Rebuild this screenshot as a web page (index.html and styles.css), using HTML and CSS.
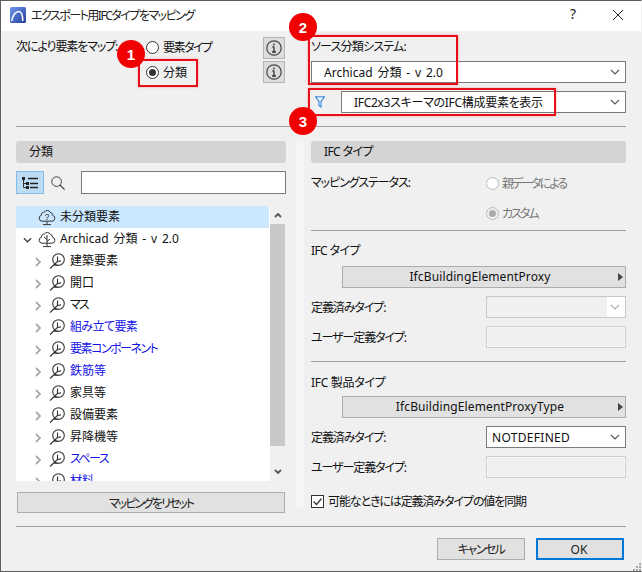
FILE: index.html
```html
<!DOCTYPE html>
<html lang="ja">
<head>
    <meta charset="UTF-8">
    <meta name="viewport" content="width=device-width, initial-scale=1.0">
    <title>エクスポート用IFCタイプをマッピング</title>
    <link rel="stylesheet" href="styles.css">
</head>
<body>
    <svg class="sprites" width="0" height="0">
        <symbol id="chev-down" viewBox="0 0 10 6"><path d="M1 1l4 4 4-4" fill="none" stroke="currentColor" stroke-width="1.1"/></symbol>
        <symbol id="closed" viewBox="0 0 6 10"><path d="M1 1l4 4-4 4" fill="none" stroke="#aaa" stroke-width="1.8"/></symbol>
        <symbol id="branch" viewBox="0 0 16 16">
            <circle cx="9.5" cy="6.5" r="5.8" fill="none" stroke="#333" stroke-width="1.1"/>
            <path d="M1 15.5l7.5-7M8.5 8.5V3.5M8.5 8.5l3.5-.6M4.5 12.2h5" fill="none" stroke="#333" stroke-width="1.1"/>
        </symbol>
        <symbol id="info" viewBox="0 0 16 16">
            <circle cx="8" cy="8" r="7.2" fill="none" stroke="#444" stroke-width="1.2"/>
            <path d="M8 3.4v2M8 6.8v5.4M6.2 6.9H8M6 12h4" stroke="#333" stroke-width="1.3" fill="none"/>
        </symbol>
    </svg>
    <div class="dialog">
        <div class="titlebar">
            <svg class="app-icon" viewBox="0 0 16 16" width="16" height="16">
                <defs>
                    <linearGradient id="app-bg" x1="0" y1="0" x2="1" y2="1">
                        <stop offset="0" stop-color="#6f98ee"/>
                        <stop offset="1" stop-color="#23409f"/>
                    </linearGradient>
                </defs>
                <rect width="16" height="16" rx="1.5" fill="url(#app-bg)"/>
                <path d="M1.5 14C3 8 6 4.5 9 4.5c2.6 0 3.6 3 3.8 9.5" fill="none" stroke="#fff" stroke-width="1.5"/>
            </svg>
            <span class="title kana-l">エクスポート用IFCタイプをマッピング</span>
            <span class="help">?</span>
            <svg class="close" viewBox="0 0 10 10" width="10" height="10"><path d="M0 0l10 10M10 0L0 10" stroke="#222" stroke-width="1"/></svg>
        </div>

        <div class="top">
            <div class="map-by">
                <span class="map-label kana-m">次により要素をマップ:</span>
                <div class="map-radios">
                    <label class="radio"><i class="dot"></i><span class="kana-l">要素タイプ</span></label>
                    <label class="radio"><i class="dot on"></i>分類</label>
                </div>
                <div class="infos">
                    <span class="info"><svg width="16" height="16"><use href="#info"/></svg></span>
                    <span class="info"><svg width="16" height="16"><use href="#info"/></svg></span>
                </div>
            </div>
            <div class="source">
                <div class="source-label">ソース分類システム:</div>
                <div class="select source-select"><span class="wide-words">Archicad 分類 - v 2.0</span><svg class="arrow"><use href="#chev-down"/></svg></div>
                <div class="filter-row">
                    <svg class="funnel" viewBox="0 0 10 12" width="10" height="12"><path d="M.6.8h8.8L6 5.5V11L4 9.5v-4Z" fill="none" stroke="#2b8ae0" stroke-width="1.1"/></svg>
                    <div class="select filter-select"><span class="kana-xs">IFC2x3スキーマのIFC構成要素を表示</span><svg class="arrow"><use href="#chev-down"/></svg></div>
                </div>
            </div>
        </div>

        <hr class="rule">

        <div class="panes">
            <div class="left-pane">
                <div class="pane-head">分類</div>
                <div class="tools">
                    <span class="view-btn">
                        <svg viewBox="0 0 16 12" width="16" height="12">
                            <path d="M1.5 2v8.5M1.5 6.5H4M1.5 10.5H4" stroke="#333" fill="none"/>
                            <path d="M6 1.5h10M8 6.5h8M8 10.5h8" stroke="#222" stroke-width="1.6" fill="none"/>
                            <rect x="0" y="0" width="3" height="3" fill="#222"/>
                            <rect x="4" y="5" width="3" height="3" fill="#222"/>
                            <rect x="4" y="9" width="3" height="3" fill="#222"/>
                        </svg>
                    </span>
                    <svg class="search" viewBox="0 0 14 14" width="14" height="14"><circle cx="5.6" cy="5.6" r="4.8" fill="none" stroke="#444"/><path d="M9 9l4.6 4.6" stroke="#444" stroke-width="1.2"/></svg>
                    <div class="search-box"></div>
                </div>
                <div class="tree-wrap">
                    <ul class="tree">
                        <li class="row selected">
                            <svg class="root-icon" viewBox="0 0 18 18" width="18" height="18">
                                <path d="M5 13.2H4a3 3 0 0 1-.6-5.9 3 3 0 0 1 3.2-3.4 3.2 3.2 0 0 1 5.6.4 3 3 0 0 1 2.4 3 3 3 0 0 1-.6 5.9Z" fill="none" stroke="#333"/>
                                <path d="M9 13.5v3M5 16.6h8" stroke="#333" fill="none"/>
                                <text x="9" y="11.5" class="qmark">?</text>
                            </svg>
                            <span>未分類要素</span>
                        </li>
                        <li class="row">
                            <svg class="toggle open" viewBox="0 0 10 6"><path d="M1 1l4 4 4-4" fill="none" stroke="#444" stroke-width="1.6"/></svg>
                            <svg class="root-icon" viewBox="0 0 18 18" width="18" height="18">
                                <path d="M5 13.2H4a3 3 0 0 1-.6-5.9 3 3 0 0 1 3.2-3.4 3.2 3.2 0 0 1 5.6.4 3 3 0 0 1 2.4 3 3 3 0 0 1-.6 5.9Z" fill="none" stroke="#333"/>
                                <path d="M9 5v11.5M9 9.5L6 7M9 11.5L12 9M5 16.6h8" stroke="#333" fill="none"/>
                            </svg>
                            <span class="wide-words">Archicad 分類 - v 2.0</span>
                        </li>
                        <li class="row child"><svg class="toggle"><use href="#closed"/></svg><svg class="branch"><use href="#branch"/></svg><span>建築要素</span></li>
                        <li class="row child"><svg class="toggle"><use href="#closed"/></svg><svg class="branch"><use href="#branch"/></svg><span>開口</span></li>
                        <li class="row child"><svg class="toggle"><use href="#closed"/></svg><svg class="branch"><use href="#branch"/></svg><span class="kana-xl">マス</span></li>
                        <li class="row child link"><svg class="toggle"><use href="#closed"/></svg><svg class="branch"><use href="#branch"/></svg><span class="kana-s">組み立て要素</span></li>
                        <li class="row child link"><svg class="toggle"><use href="#closed"/></svg><svg class="branch"><use href="#branch"/></svg><span class="kana-l">要素コンポーネント</span></li>
                        <li class="row child link"><svg class="toggle"><use href="#closed"/></svg><svg class="branch"><use href="#branch"/></svg><span>鉄筋等</span></li>
                        <li class="row child"><svg class="toggle"><use href="#closed"/></svg><svg class="branch"><use href="#branch"/></svg><span>家具等</span></li>
                        <li class="row child"><svg class="toggle"><use href="#closed"/></svg><svg class="branch"><use href="#branch"/></svg><span>設備要素</span></li>
                        <li class="row child"><svg class="toggle"><use href="#closed"/></svg><svg class="branch"><use href="#branch"/></svg><span>昇降機等</span></li>
                        <li class="row child link"><svg class="toggle"><use href="#closed"/></svg><svg class="branch"><use href="#branch"/></svg><span class="kana-l">スペース</span></li>
                        <li class="row child link"><svg class="toggle"><use href="#closed"/></svg><svg class="branch"><use href="#branch"/></svg><span>材料</span></li>
                    </ul>
                    <div class="scrollbar">
                        <svg class="sb-arrow" viewBox="0 0 8 6" width="8" height="6"><path d="M1 5l3-3 3 3" fill="none" stroke="#555" stroke-width="1.8"/></svg>
                        <div class="sb-track"><div class="sb-thumb"></div></div>
                        <svg class="sb-arrow" viewBox="0 0 8 6" width="8" height="6"><path d="M1 1l3 3 3-3" fill="none" stroke="#555" stroke-width="1.8"/></svg>
                    </div>
                </div>
                <button class="reset kana-xl">マッピングをリセット</button>
            </div>

            <div class="splitter"></div>

            <div class="right-pane">
                <div class="pane-head kana-s">IFC タイプ</div>
                <div class="status">
                    <span class="status-label kana-m">マッピングステータス:</span>
                    <div class="status-radios">
                        <label class="radio off"><i class="dot"></i><span class="kana-xl">親データによる</span></label>
                        <label class="radio off"><i class="dot on"></i><span class="kana-xl">カスタム</span></label>
                    </div>
                </div>
                <hr class="rule status-rule">
                <div class="group-title kana-s">IFC タイプ</div>
                <div class="picker">IfcBuildingElementProxy<i class="tri"></i></div>
                <div class="field">
                    <span class="kana-m">定義済みタイプ:</span>
                    <div class="select disabled"><b></b><svg class="arrow"><use href="#chev-down"/></svg></div>
                </div>
                <div class="field">
                    <span class="kana-m">ユーザー定義タイプ:</span>
                    <div class="text-box"></div>
                </div>
                <hr class="rule group-rule">
                <div class="group-title second kana-xs">IFC 製品タイプ</div>
                <div class="picker second">IfcBuildingElementProxyType<i class="tri"></i></div>
                <div class="field">
                    <span class="kana-m">定義済みタイプ:</span>
                    <div class="select value"><span>NOTDEFINED</span><svg class="arrow"><use href="#chev-down"/></svg></div>
                </div>
                <div class="field">
                    <span class="kana-m">ユーザー定義タイプ:</span>
                    <div class="text-box"></div>
                </div>
                <label class="sync">
                    <svg viewBox="0 0 13 13" width="13" height="13"><rect x=".5" y=".5" width="12" height="12" fill="#fff" stroke="#333"/><path d="M2.5 6.5l3 3 5-6" fill="none" stroke="#333" stroke-width="1.2"/></svg>
                    <span class="kana-m">可能なときには定義済みタイプの値を同期</span>
                </label>
            </div>
        </div>

        <hr class="rule bottom-rule">

        <div class="actions">
            <button class="btn kana-l">キャンセル</button>
            <button class="btn ok">OK</button>
        </div>
        <svg class="grip" viewBox="0 0 9 9" width="9" height="9"><path d="M7 1h2v2H7zM4 4h2v2H4zM7 4h2v2H7zM1 7h2v2H1zM4 7h2v2H4zM7 7h2v2H7z" fill="#a8a8a8"/></svg>

        <!-- callouts on top of the shot -->
        <div class="mark mark-1"></div>
        <div class="mark mark-2"></div>
        <div class="mark mark-3"></div>
        <div class="badge badge-1">1</div>
        <div class="badge badge-2">2</div>
        <div class="badge badge-3">3</div>
    </div>
</body>
</html>
```

FILE: styles.css
```css
* {
    box-sizing: border-box;
}

html, body {
    margin: 0;
    padding: 0;
}

body {
    font-family: "Noto Sans", "Noto Sans CJK JP", sans-serif;
    font-size: 12px;
    font-feature-settings: "palt";
    color: #111;
    background: #f0f0f0;
}

/* the kana in the shot are much narrower than Noto's */
.kana-xs {
    letter-spacing: -.3px;
}

.kana-s {
    letter-spacing: -.6px;
}

.kana-m {
    letter-spacing: -1.1px;
}

.kana-l {
    letter-spacing: -1.5px;
}

.kana-xl {
    letter-spacing: -2px;
}

.wide-words {
    word-spacing: 1.75px;
}

.sprites {
    position: absolute;
}

.dialog {
    position: relative;
    width: 642px;
    height: 572px;
    border: 1px solid #5e5e5e;
    border-right-color: #f0f0f0;
    background: #f0f0f0;
    display: flex;
    flex-direction: column;
    overflow: hidden;
}

.titlebar {
    height: 30px;
    flex: none;
    background: #fff;
    display: flex;
    align-items: center;
    padding: 0 18px 2px 9px;
}

.app-icon {
    flex: none;
}

.title {
    margin-left: 5px;
    flex: 1;
    color: #222;
}

.help {
    font-size: 14px;
    margin: 0 37px 3px 0;
    color: #222;
}

.top {
    height: 95px;
    flex: none;
    display: flex;
    padding-left: 15px;
}

.map-by {
    width: 269px;
    display: flex;
    padding-top: 6px;
    position: relative;
}

.map-label {
    width: 130px;
    line-height: 20px;
}

.map-radios {
    display: flex;
    flex-direction: column;
    gap: 5px;
}

.radio {
    display: flex;
    align-items: center;
    height: 20px;
    gap: 4px;
}

.radio.off {
    color: #777;
    gap: 3px;
}

.dot {
    width: 13px;
    height: 13px;
    border-radius: 50%;
    border: 1px solid #333;
    background: #fff;
    position: relative;
    flex: none;
}

.dot.on::after {
    content: "";
    position: absolute;
    left: 2px;
    top: 2px;
    width: 7px;
    height: 7px;
    border-radius: 50%;
    background: #333;
}

.radio.off .dot {
    border-color: #bbb;
}

.radio.off .dot.on {
    background: #f0f0f0;
}

.radio.off .dot.on::after {
    background: #aaa;
}

.infos {
    margin-left: auto;
    display: flex;
    flex-direction: column;
    gap: 2px;
}

.info {
    width: 22px;
    height: 22px;
    background: #dcdcdc;
    border: 1px solid #b5b5b5;
    display: flex;
    align-items: center;
    justify-content: center;
}

.source {
    margin-left: 26px;
    width: 315px;
    padding-top: 6px;
}

.source-label {
    line-height: 20px;
    height: 24px;
    letter-spacing: -.8px;
}

.select {
    height: 22px;
    border: 1px solid #7a7a7a;
    background: #fff;
    display: flex;
    align-items: center;
    justify-content: space-between;
    position: relative;
}

.select .arrow {
    width: 10px;
    height: 6px;
    margin-right: 5px;
    color: #555;
}

.source-select {
    width: 315px;
    padding-left: 12px;
}

.filter-row {
    display: flex;
    align-items: center;
    margin-top: 8px;
    padding-left: 4px;
}

.funnel {
    flex: none;
}

.filter-select {
    margin-left: 16px;
    width: 285px;
    padding-left: 12px;
}

.rule {
    border: 0;
    border-top: 1px solid #a0a0a0;
    margin: 0;
    height: 0;
    flex: none;
}

.dialog > .rule {
    margin-left: 15px;
    width: 610px;
}

.panes {
    flex: none;
    height: 385px;
    margin-top: 14px;
    display: flex;
    padding-left: 15px;
}

.left-pane {
    width: 270px;
    flex: none;
}

.splitter {
    width: 8px;
    margin-left: 10px;
    background: #f5f5f5;
    height: 367px;
    flex: none;
}

.right-pane {
    width: 315px;
    margin-left: 7px;
    flex: none;
}

.pane-head {
    height: 22px;
    line-height: 22px;
    background: #d4d4d4;
    border-radius: 3px;
    padding-left: 13px;
}

.tools {
    display: flex;
    align-items: center;
    margin-top: 8px;
}

.view-btn {
    width: 28px;
    height: 23px;
    background: #bcdcf4;
    border: 1px solid #86bce6;
    display: flex;
    align-items: center;
    justify-content: center;
}

.search {
    margin-left: 7px;
}

.search-box {
    margin-left: 16px;
    width: 205px;
    height: 23px;
    background: #fff;
    border: 1px solid #7a7a7a;
}

.tree-wrap {
    margin-top: 12px;
    height: 275px;
    display: flex;
}

.tree {
    list-style: none;
    margin: 0;
    padding: 0;
    width: 254px;
    height: 275px;
    background: #fff;
    overflow: hidden;
    flex: none;
}

.row {
    height: 22px;
    display: flex;
    align-items: center;
    padding-left: 22px;
    position: relative;
    white-space: nowrap;
}

.row span {
    margin-top: -2px;
}

.row.selected {
    background: #cce8ff;
    margin-right: 1px;
}

.row .root-icon {
    flex: none;
    margin-right: 4px;
}

.row .toggle {
    position: absolute;
    left: 7px;
    top: 9px;
    width: 9px;
    height: 6px;
}

.row.child {
    padding-left: 33px;
}

.row.child .toggle {
    left: 19px;
    top: 7px;
    width: 6px;
    height: 10px;
}

.row .branch {
    width: 16px;
    height: 16px;
    flex: none;
    margin-right: 5px;
}

.row.link {
    color: #1414e6;
}

.scrollbar {
    width: 15px;
    display: flex;
    flex-direction: column;
    align-items: center;
    flex: none;
}

.sb-arrow {
    flex: none;
    margin: 6px 0;
}

.sb-track {
    flex: 1;
    width: 15px;
}

.sb-thumb {
    height: 222px;
    background: #c8c8c8;
}

.reset {
    display: block;
    width: 268px;
    height: 21px;
    margin: 11px 0 0 1px;
    padding: 0;
    background: #e1e1e1;
    border: 1px solid #adadad;
    font-family: inherit;
    font-size: 12px;
    font-feature-settings: "palt";
    color: #222;
}

.status {
    display: flex;
    padding-top: 10px;
}

.status-label {
    width: 175px;
    line-height: 20px;
}

.status-radios {
    display: flex;
    flex-direction: column;
    gap: 10px;
}

.status-rule {
    margin-top: 7px;
}

.group-title {
    margin-top: 10px;
    line-height: 20px;
}

.group-title.second {
    margin-top: 11px;
}

.picker {
    width: 284px;
    height: 22px;
    margin: 5px 0 0 31px;
    background: #e1e1e1;
    border: 1px solid #adadad;
    text-align: center;
    line-height: 20px;
    letter-spacing: .12px;
    position: relative;
    padding-right: 8px;
}

.picker.second {
    margin-top: 3px;
}

.tri {
    position: absolute;
    right: 2px;
    top: 6px;
    border-left: 5px solid #444;
    border-top: 4px solid transparent;
    border-bottom: 4px solid transparent;
}

.field {
    display: flex;
    align-items: center;
    justify-content: space-between;
    margin-top: 8px;
    height: 22px;
}

.field .select,
.field .text-box {
    width: 140px;
    height: 22px;
}

.select.disabled {
    border: 1px solid #c8c8c8;
    background: #fff;
}

.select.disabled b {
    display: block;
    width: 120px;
    height: 20px;
    background: #f0f0f0;
}

.select.disabled .arrow {
    color: #aaa;
}

.select.value {
    padding-left: 5px;
    letter-spacing: .3px;
}

.text-box {
    background: #f0f0f0;
    border: 1px solid #cfcfcf;
    box-shadow: inset 0 0 0 1px #f8f8f8;
}

.group-rule {
    margin-top: 13px;
}

.sync {
    display: flex;
    align-items: center;
    gap: 4px;
    margin-top: 13px;
    height: 20px;
}

.actions {
    display: flex;
    justify-content: flex-end;
    gap: 11px;
    margin-top: 11px;
    padding-right: 17px;
}

.btn {
    width: 88px;
    height: 22px;
    padding: 0;
    background: #e1e1e1;
    border: 1px solid #adadad;
    font-family: inherit;
    font-size: 12px;
    font-feature-settings: "palt";
    color: #222;
}

.btn.ok {
    border: 2px solid #0078d7;
    padding-right: 2px;
}

.grip {
    position: absolute;
    right: 0;
    bottom: 0;
}

.mark {
    position: absolute;
    border: 2px solid #e60f19;
    box-shadow: 0 0 2px rgba(255, 120, 120, .7);
}

.mark-1 {
    left: 137px;
    top: 58px;
    width: 60px;
    height: 28px;
}

.mark-2 {
    left: 307px;
    top: 34px;
    width: 150px;
    height: 50px;
}

.mark-3 {
    left: 307px;
    top: 87px;
    width: 248px;
    height: 28px;
}

.badge {
    position: absolute;
    width: 28px;
    height: 28px;
    border-radius: 50%;
    background: #f00000;
    color: #fff;
    font: bold 15px "Liberation Sans", sans-serif;
    display: flex;
    align-items: center;
    justify-content: center;
}

.badge-1 {
    left: 116px;
    top: 39px;
}

.badge-2 {
    left: 288px;
    top: 12px;
}

.badge-3 {
    left: 288px;
    top: 106px;
}

.qmark {
    font: 9px "Liberation Sans", sans-serif;
    text-anchor: middle;
    fill: #333;
}
```
